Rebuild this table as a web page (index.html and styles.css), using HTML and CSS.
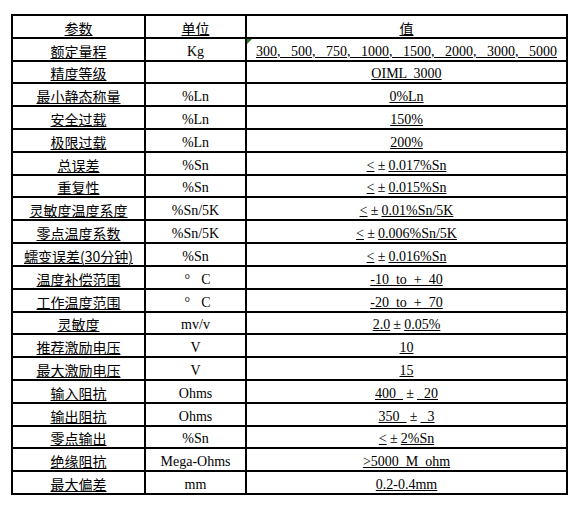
FILE: index.html
```html
<!DOCTYPE html>
<html lang="zh-CN">
<head>
<meta charset="utf-8">
<title>参数表</title>
<link rel="stylesheet" href="styles.css">
</head>
<body>
<div class="sheet">
  <div class="c k"><u>参数</u></div><div class="c u"><u class="cj">单位</u></div><div class="c v"><u class="cj">值</u></div>
  <div class="c k"><u>额定量程</u></div><div class="c u">Kg</div><div class="c v flag wide"><u>300, 500, 750, 1000, 1500, 2000, 3000, 5000</u></div>
  <div class="c k"><u>精度等级</u></div><div class="c u"></div><div class="c v"><u>OIML 3000</u></div>
  <div class="c k"><u>最小静态称量</u></div><div class="c u">%Ln</div><div class="c v"><u>0%Ln</u></div>
  <div class="c k"><u>安全过载</u></div><div class="c u">%Ln</div><div class="c v"><u>150%</u></div>
  <div class="c k"><u>极限过载</u></div><div class="c u">%Ln</div><div class="c v"><u>200%</u></div>
  <div class="c k"><u>总误差</u></div><div class="c u">%Sn</div><div class="c v"><u>&lt;<span class="fw">±</span>0.017%Sn</u></div>
  <div class="c k"><u>重复性</u></div><div class="c u">%Sn</div><div class="c v"><u>&lt;<span class="fw">±</span>0.015%Sn</u></div>
  <div class="c k"><u>灵敏度温度系度</u></div><div class="c u">%Sn/5K</div><div class="c v"><u>&lt;<span class="fw">±</span>0.01%Sn/5K</u></div>
  <div class="c k"><u>零点温度系数</u></div><div class="c u">%Sn/5K</div><div class="c v"><u>&lt;<span class="fw">±</span>0.006%Sn/5K</u></div>
  <div class="c k"><u>蠕变误差(30分钟)</u></div><div class="c u">%Sn</div><div class="c v"><u>&lt;<span class="fw">±</span>0.016%Sn</u></div>
  <div class="c k"><u>温度补偿范围</u></div><div class="c u"><span class="fw">°</span> C</div><div class="c v"><u>-10 to + 40</u></div>
  <div class="c k"><u>工作温度范围</u></div><div class="c u"><span class="fw">°</span> C</div><div class="c v"><u>-20 to + 70</u></div>
  <div class="c k"><u>灵敏度</u></div><div class="c u">mv/v</div><div class="c v"><u>2.0<span class="fw">±</span>0.05%</u></div>
  <div class="c k"><u>推荐激励电压</u></div><div class="c u">V</div><div class="c v"><u>10</u></div>
  <div class="c k"><u>最大激励电压</u></div><div class="c u">V</div><div class="c v"><u>15</u></div>
  <div class="c k"><u>输入阻抗</u></div><div class="c u">Ohms</div><div class="c v"><u>400 <span class="fw">±</span> 20</u></div>
  <div class="c k"><u>输出阻抗</u></div><div class="c u">Ohms</div><div class="c v"><u>350 <span class="fw">±</span> 3</u></div>
  <div class="c k"><u>零点输出</u></div><div class="c u">%Sn</div><div class="c v"><u>&lt;<span class="fw">±</span>2%Sn</u></div>
  <div class="c k"><u>绝缘阻抗</u></div><div class="c u">Mega-Ohms</div><div class="c v"><u>&gt;5000 M ohm</u></div>
  <div class="c k"><u>最大偏差</u></div><div class="c u">mm</div><div class="c v"><u>0.2-0.4mm</u></div>
</div>
</body>
</html>
```
FILE: styles.css
```css
html, body {
  margin: 0;
  padding: 0;
  background: #fff;
}

.sheet {
  display: grid;
  grid-template-columns: 131px 99px 319px;
  grid-template-rows: repeat(21, 1fr);
  gap: 2px;
  padding: 2px;
  background: #000;
  width: max-content;
  height: 481px;
  box-sizing: border-box;
  margin: 14px 0 0 11px;
}

.c {
  background: #fff;
  color: #000;
  display: flex;
  align-items: flex-end;
  justify-content: center;
  font-size: 14px;
  line-height: 17px;
  white-space: pre;
  position: relative;
  min-height: 0;
}

.c u {
  text-decoration: underline;
  text-decoration-thickness: 1px;
  text-underline-offset: 1px;
}

.k {
  font-family: "Noto Sans CJK SC", "Noto Sans", sans-serif;
}

.u, .v {
  font-family: "Liberation Serif", "Noto Sans CJK SC", serif;
  word-spacing: 3.5px;
}

.v.wide {
  word-spacing: 7px;
}

.u .cj, .v .cj {
  font-family: "Noto Sans CJK SC", sans-serif;
  word-spacing: 0;
}

.fw {
  display: inline-block;
  width: 14px;
  text-align: center;
  font-family: "Liberation Serif", serif;
}

.flag::before {
  content: "";
  position: absolute;
  left: 0;
  top: 0;
  width: 0;
  height: 0;
  border-top: 5px solid #1e7b1e;
  border-right: 5px solid transparent;
}
```
